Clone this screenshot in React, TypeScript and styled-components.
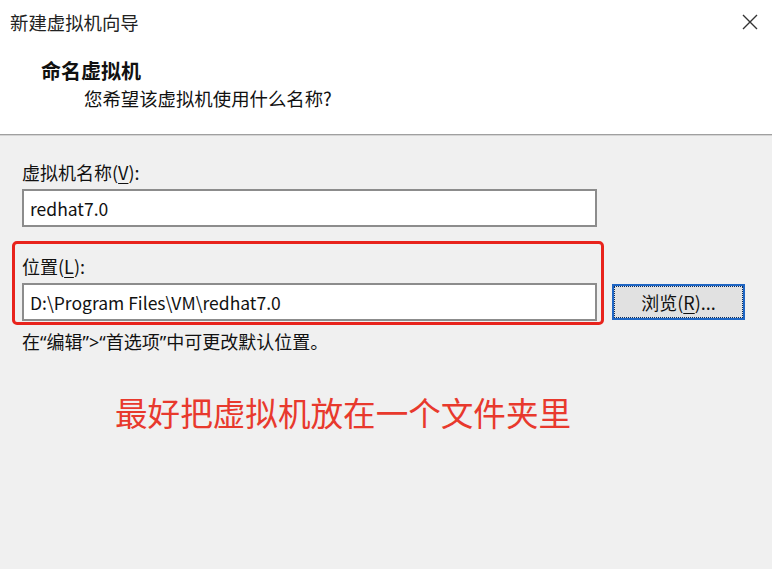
import styled, { createGlobalStyle } from "styled-components";

const GlobalStyle = createGlobalStyle`
  html, body {
    margin: 0;
    padding: 0;
    background: #f0f0f0;
  }
  body {
    font-family: "Noto Sans CJK SC", "Noto Sans", sans-serif;
    color: #111;
  }
`;

const Window = styled("div")`
  width: 772px;
  height: 569px;
  background: #f0f0f0;
  overflow: hidden;
`;

const Header = styled("div")`
  height: 134px;
  background: #ffffff;
`;

const TitleBar = styled("div")`
  height: 44px;
  display: flex;
  align-items: center;
  justify-content: space-between;
  padding: 0 14px 0 10px;
`;

const Title = styled("span")`
  font-size: 18.4px;
  line-height: 24px;
  color: #222;
`;

const CloseButton = styled("button")`
  width: 16px;
  height: 16px;
  padding: 0;
  border: none;
  background: transparent;
  display: flex;
  align-items: center;
  justify-content: center;
`;

const HeadingBlock = styled("div")`
  padding-left: 41px;
  margin-top: 14px;
`;

const Heading = styled("div")`
  font-size: 20px;
  font-weight: 700;
  line-height: 26px;
`;

const Subtitle = styled("div")`
  font-size: 18.4px;
  line-height: 26px;
  padding-left: 43px;
  margin-top: 1px;
`;

const Divider = styled("div")`
  height: 1px;
  background: #a0a0a0;
  border-bottom: 1px solid #d4d4d4;
`;

const Body = styled("div")`
  padding: 24px 22px 0 22px;
`;

const Label = styled("div")`
  font-size: 18px;
  line-height: 24px;
`;

const Key = styled("span")`
  text-decoration: underline;
  text-underline-offset: 3px;
  text-decoration-thickness: 1px;
`;

const TextBox = styled("div")`
  box-sizing: border-box;
  width: 575px;
  height: 38px;
  margin-top: 5px;
  background: #ffffff;
  border: 2px solid #8c8c8c;
  padding-left: 6px;
  display: flex;
  align-items: center;
  font-size: 17.5px;
  color: #111;
`;

const LocationRow = styled("div")`
  display: flex;
  align-items: flex-end;
  margin-top: 14px;
`;

const Highlight = styled("div")`
  margin-left: -10px;
  border: 3px solid #e8231c;
  border-radius: 5px;
  padding: 10px 4px 1px 7px;
`;

const BrowseButton = styled("button")`
  position: relative;
  box-sizing: border-box;
  width: 133px;
  height: 36px;
  margin: 0 0 5px 8px;
  background: #e1e1e1;
  border: 2px solid #1f66c4;
  font-family: "Noto Sans CJK SC", "Noto Sans", sans-serif;
  font-size: 18px;
  color: #111;
  padding: 0;
  &::after {
    content: "";
    position: absolute;
    inset: 0;
    border: 1px dotted #0b2c5c;
  }
`;

const Hint = styled("div")`
  font-family: "Noto Sans", "Noto Sans CJK SC", sans-serif;
  font-size: 18px;
  line-height: 24px;
  margin-top: 5px;
`;

const Note = styled("div")`
  font-size: 32.6px;
  line-height: 40px;
  color: #e8392d;
  padding-left: 93px;
  margin-top: 38px;
`;

const CloseIcon = () => (
  <svg width="16" height="16" viewBox="0 0 16 16">
    <path d="M1 1 L15 15 M15 1 L1 15" stroke="#333" strokeWidth="1.4" fill="none" />
  </svg>
);

export default function App() {
  return (
    <>
      <GlobalStyle />
      <Window>
        <Header>
          <TitleBar>
            <Title>新建虚拟机向导</Title>
            <CloseButton aria-label="关闭">
              <CloseIcon />
            </CloseButton>
          </TitleBar>
          <HeadingBlock>
            <Heading>命名虚拟机</Heading>
            <Subtitle>您希望该虚拟机使用什么名称?</Subtitle>
          </HeadingBlock>
        </Header>
        <Divider />
        <Body>
          <Label>
            虚拟机名称(<Key>V</Key>):
          </Label>
          <TextBox>redhat7.0</TextBox>
          <LocationRow>
            <Highlight>
              <Label>
                位置(<Key>L</Key>):
              </Label>
              <TextBox>D:\Program Files\VM\redhat7.0</TextBox>
            </Highlight>
            <BrowseButton>
              浏览(<Key>R</Key>)...
            </BrowseButton>
          </LocationRow>
          <Hint>在“编辑”&gt;“首选项”中可更改默认位置。</Hint>
          <Note>最好把虚拟机放在一个文件夹里</Note>
        </Body>
      </Window>
    </>
  );
}
